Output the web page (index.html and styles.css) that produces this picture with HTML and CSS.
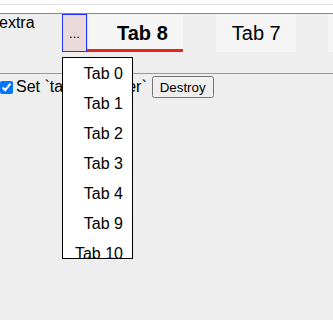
FILE: index.html
```html
<!DOCTYPE html>
<html>
<head>
<meta charset="utf-8">
<link rel="stylesheet" href="styles.css">
</head>
<body>
<div class="top"><div class="top-line"></div></div>
<div class="nav">
  <div class="extra">extra</div>
  <div class="more">...</div>
  <div class="tab tab-active">Tab 8<span class="ink"></span></div>
  <div class="tab">Tab 7</div>
  <div class="tab">Tab 6</div>
</div>
<div class="content">
  <label class="opt"><input type="checkbox" class="check" checked>Set `tabBarGutter`</label><button class="btn">Destroy</button>
</div>
<div class="dropdown">
  <div class="item">Tab 0</div>
  <div class="item">Tab 1</div>
  <div class="item">Tab 2</div>
  <div class="item">Tab 3</div>
  <div class="item">Tab 4</div>
  <div class="item">Tab 9</div>
  <div class="item">Tab 10</div>
</div>
</body>
</html>
```
FILE: styles.css
```css
html, body {
  margin: 0;
  padding: 0;
  background: #eeeeee;
  font-family: "Liberation Sans", Arial, sans-serif;
  font-size: 16px;
  color: #000;
  overflow: hidden;
}
.top {
  background: #fff;
  height: 13px;
  padding-top: 4px;
  box-sizing: border-box;
}
.top-line {
  height: 1px;
  background: #e2e2e2;
}
.nav {
  display: flex;
  align-items: flex-start;
  border-top: 1px solid #888;
  border-bottom: 1px solid #999;
  height: 59px;
  overflow: hidden;
  white-space: nowrap;
}
.extra {
  width: 63px;
  margin-left: -1px;
  flex: none;
}
.more {
  flex: none;
  width: 23px;
  height: 36px;
  border: 1px solid #2433f0;
  background: #ead9da;
  display: flex;
  align-items: center;
  justify-content: center;
  font-size: 13px;
  line-height: 1;
}
.tab {
  flex: none;
  position: relative;
  height: 38px;
  background: #f5f5f5;
  padding: 0 15px 0 16px;
  margin-left: 33px;
  display: flex;
  align-items: center;
  font-size: 20px;
}
.tab-active {
  margin-left: 0;
  font-weight: bold;
  border-left: 1px solid #f0d0d0;
  padding: 0 15px 0 29px;
}
.tab + .tab:last-child {
  margin-left: 32px;
}
.ink {
  position: absolute;
  left: -1px;
  right: 0;
  bottom: 0;
  height: 3px;
  background: #e02a20;
}
.content {
  display: flex;
  align-items: center;
  padding-top: 2px;
}
.opt {
  display: flex;
  align-items: center;
}
.check {
  margin: 0 3px 0 0;
  width: 13px;
  height: 13px;
}
.btn {
  font-family: "Liberation Sans", Arial, sans-serif;
  font-size: 13.33px;
  margin: 0 0 0 5px;
  padding: 1px 6px;
  height: 22px;
}
.dropdown {
  position: absolute;
  left: 62px;
  top: 57px;
  width: 69px;
  height: 199px;
  padding-top: 1px;
  border: 1px solid #000;
  background: #fff;
  overflow: hidden;
}
.item {
  height: 30px;
  line-height: 30px;
  text-align: right;
  padding-right: 9px;
  white-space: nowrap;
}
```
